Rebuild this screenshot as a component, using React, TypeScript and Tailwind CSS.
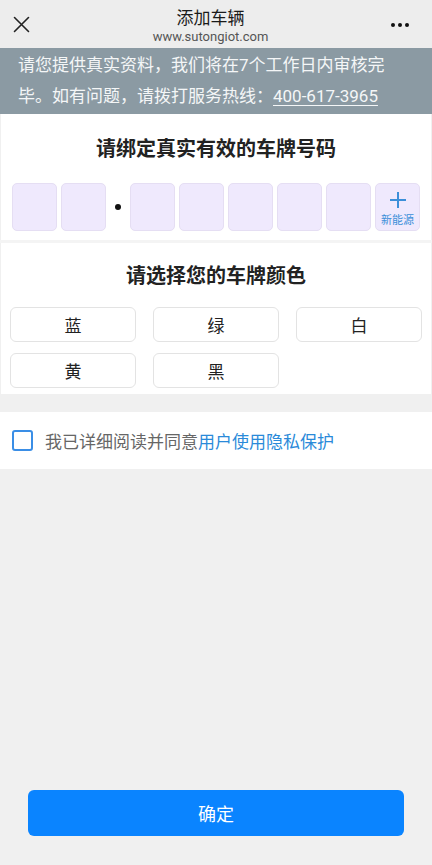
import React from "react";

const font = { fontFamily: '"Noto Sans CJK SC", "Noto Sans", sans-serif' };
const latinFont = { fontFamily: 'Roboto, "Noto Sans CJK SC", sans-serif' };

function PlateBox({ children }: { children?: React.ReactNode }) {
  return (
    <div className="w-[45px] h-[48px] rounded-[5px] bg-[#efe9fd] border border-[#e5def3] flex flex-col items-center justify-center">
      {children}
    </div>
  );
}

function ColorBtn({ label }: { label: string }) {
  return (
    <div className="h-[35px] rounded-[6px] border border-[#e3e3e3] bg-white flex items-center justify-center text-[17px] text-[#222]">
      {label}
    </div>
  );
}

export default function App() {
  return (
    <div className="w-[432px] h-[865px] bg-[#f0f0f0] flex flex-col" style={font}>
      {/* Header */}
      <div className="h-[48px] bg-[#ededed] flex items-center px-[13px] relative">
        <svg width="17" height="17" viewBox="0 0 17 17" className="shrink-0">
          <path d="M1.5 1.5 L15.5 15.5 M15.5 1.5 L1.5 15.5" stroke="#222" strokeWidth="1.6" strokeLinecap="round" />
        </svg>
        <div className="flex-1 flex flex-col items-center leading-none">
          <div className="text-[17px] text-[#1a1a1a] mt-[2px]">添加车辆</div>
          <div className="text-[13px] text-[#555] mt-[5px]" style={latinFont}>www.sutongiot.com</div>
        </div>
        <div className="flex gap-[3px] mr-[10px] mt-[1px]">
          <span className="w-[4px] h-[4px] rounded-full bg-[#111]" />
          <span className="w-[4px] h-[4px] rounded-full bg-[#111]" />
          <span className="w-[4px] h-[4px] rounded-full bg-[#111]" />
        </div>
      </div>

      {/* Banner */}
      <div className="h-[66px] bg-[#8b9aa3] pl-[18px] pt-[2px] text-[17px] leading-[31px] text-[#f4f6f7]" style={latinFont}>
        <div>请您提供真实资料，我们将在7个工作日内审核完</div>
        <div className="flex">
          <span>毕。如有问题，请拨打服务热线：</span>
          <span className="underline underline-offset-[3px]">400-617-3965</span>
        </div>
      </div>

      {/* Plate section */}
      <div className="bg-white mx-[1px] h-[126px] flex flex-col items-center">
        <div className="text-[20px] font-bold text-[#222] mt-[20px] leading-[28px]">请绑定真实有效的车牌号码</div>
        <div className="flex items-center mt-[21px] self-start ml-[11px]">
          <div className="flex gap-[4px]">
            <PlateBox />
            <PlateBox />
          </div>
          <div className="w-[24px] flex justify-center">
            <span className="w-[6px] h-[6px] rounded-full bg-[#111]" />
          </div>
          <div className="flex gap-[4px]">
            <PlateBox />
            <PlateBox />
            <PlateBox />
            <PlateBox />
            <PlateBox />
            <PlateBox>
              <svg width="18" height="18" viewBox="0 0 18 18" className="mt-[2px]">
                <path d="M9 1 V17 M1 9 H17" stroke="#3b8fd9" strokeWidth="2" />
              </svg>
              <span className="text-[11px] leading-none text-[#3b8fd9] mt-[5px]">新能源</span>
            </PlateBox>
          </div>
        </div>
      </div>
      <div className="h-[3px] bg-[#f4f4f4]" />

      {/* Color section */}
      <div className="bg-white mx-[1px] h-[151px] px-[9px]">
        <div className="text-[20px] font-bold text-[#222] text-center mt-[18px] leading-[28px]">请选择您的车牌颜色</div>
        <div className="grid grid-cols-3 gap-x-[17px] gap-y-[11px] mt-[18px]">
          <ColorBtn label="蓝" />
          <ColorBtn label="绿" />
          <ColorBtn label="白" />
          <ColorBtn label="黄" />
          <ColorBtn label="黑" />
        </div>
      </div>

      {/* Agreement */}
      <div className="mt-[18px] h-[57px] bg-white flex items-center px-[12px]">
        <div className="w-[21px] h-[21px] rounded-[3px] border-2 border-[#3a8ee6] shrink-0" />
        <div className="ml-[12px] text-[17px] text-[#666]">
          我已详细阅读并同意<span className="text-[#2a8ad9]">用户使用隐私保护</span>
        </div>
      </div>

      <div className="flex-1" />

      {/* Confirm */}
      <div className="px-[28px] pb-[29px]">
        <div className="h-[46px] rounded-[6px] bg-[#0a84ff] flex items-center justify-center text-[18px] text-white">
          确定
        </div>
      </div>
    </div>
  );
}
